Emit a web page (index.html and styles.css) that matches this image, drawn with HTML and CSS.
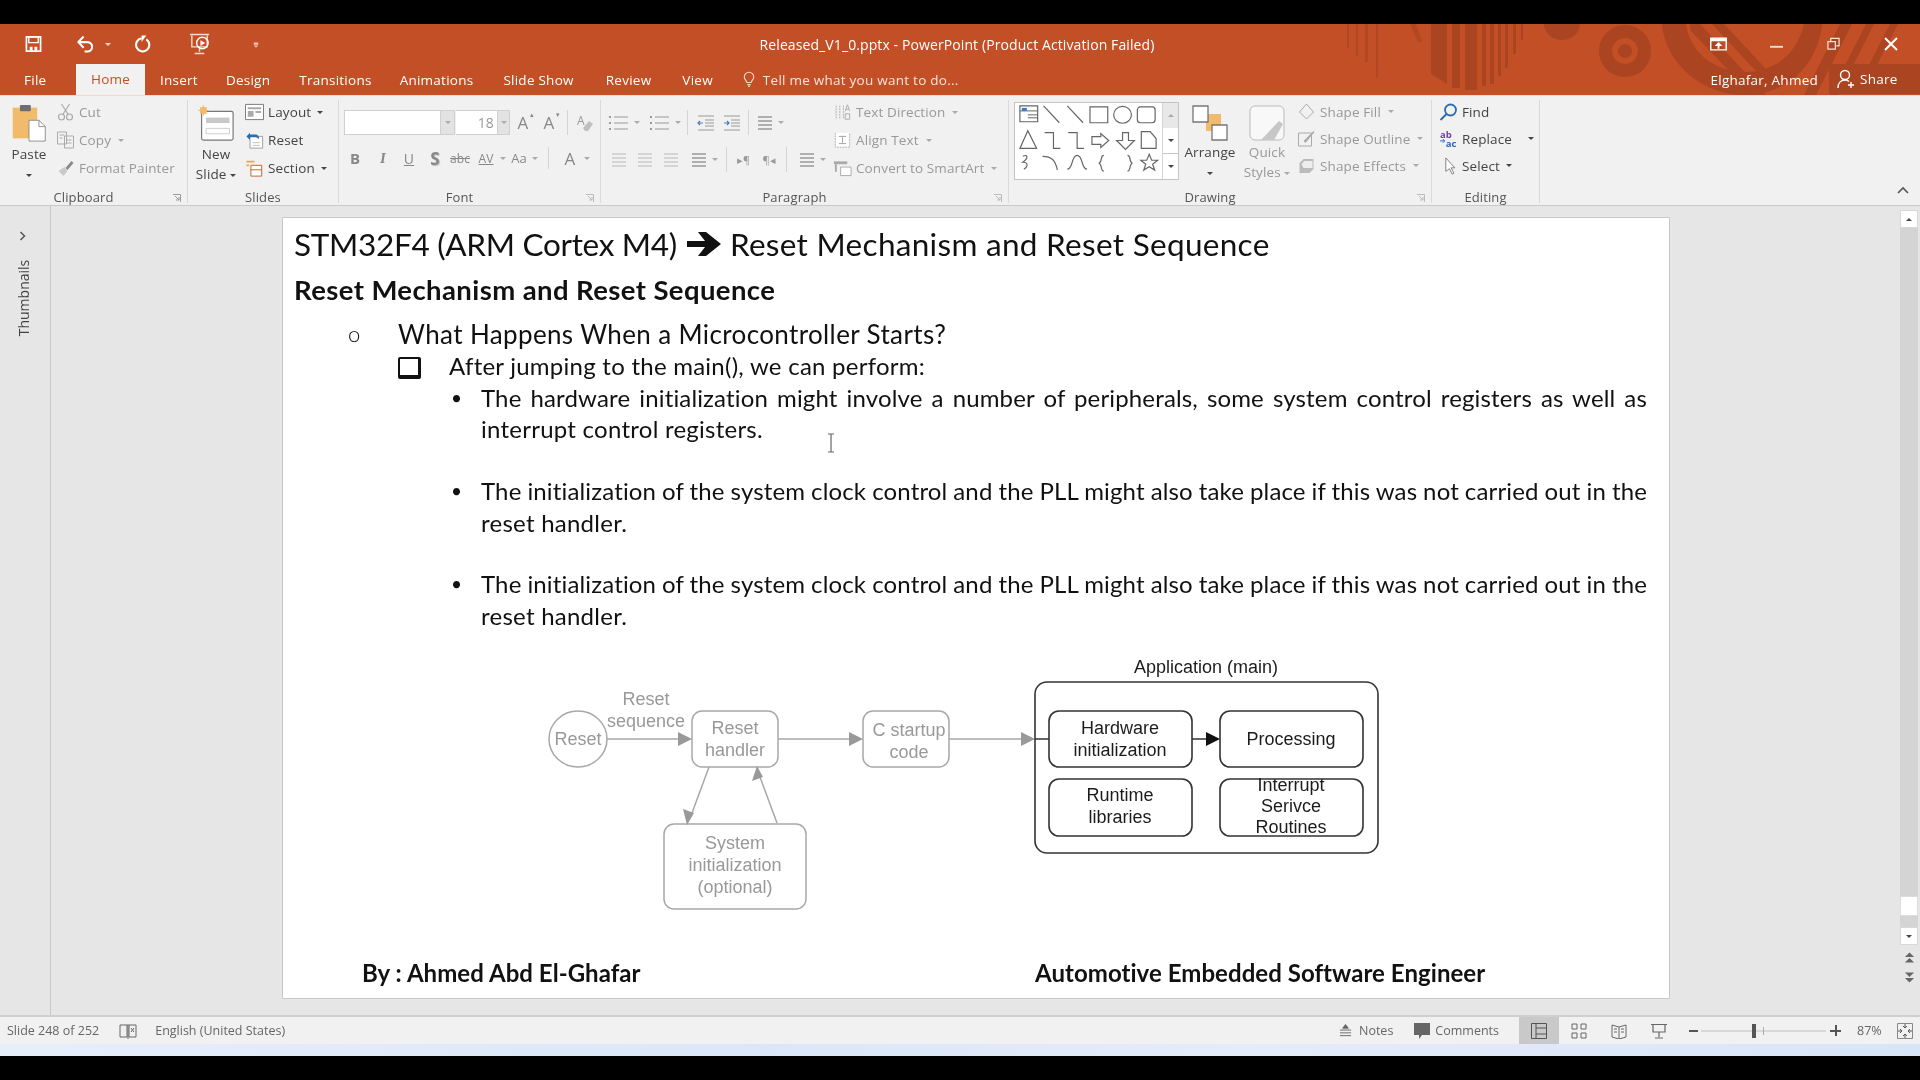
FILE: index.html
```html
<!DOCTYPE html>
<html lang="en">
<head>
<meta charset="utf-8">
<title>Released_V1_0.pptx - PowerPoint</title>
<link rel="stylesheet" href="styles.css">
</head>
<body>
<svg class="defs" aria-hidden="true">
  <symbol id="lines" viewBox="0 0 20 20"><path d="M3 4h14M3 8h14M3 12h14M3 16h14" fill="none" stroke="currentColor" stroke-width="1.3"/></symbol>
  <symbol id="bullets" viewBox="0 0 24 20"><path d="M7 4h14M7 10h14M7 16h14" stroke="currentColor" stroke-width="1.2"/><path d="M2 3h2v2H2zM2 9h2v2H2zM2 15h2v2H2z" fill="currentColor"/></symbol>
  <symbol id="indent" viewBox="0 0 20 20"><path d="M2 3h16M9 7h9M9 10h9M9 13h9M2 17h16" stroke="currentColor" stroke-width="1.2"/><path d="M7 10H2m2-2-2 2 2 2" fill="none" stroke="#4a7ebb" stroke-width="1.2"/></symbol>
  <symbol id="outdent" viewBox="0 0 20 20"><path d="M2 3h16M9 7h9M9 10h9M9 13h9M2 17h16" stroke="currentColor" stroke-width="1.2"/><path d="M2 10h5m-2-2 2 2-2 2" fill="none" stroke="#4a7ebb" stroke-width="1.2"/></symbol>
</svg>

<div class="letterbox-top"></div>

<header class="titlebar">
  <svg class="art" viewBox="0 24 1920 71" aria-hidden="true">
    <g fill="#ab4421">
      <path d="M1347 24h2v24h-2zM1356 24h2v32h-2zM1365 24h3v38h-3zM1376 24h2v54h-2z" opacity=".7"/>
      <path d="M1410 24h6l6 18h-4z" opacity=".7"/>
      <path d="M1431 24h16v60l-16-10zM1452 24h8v64h-8zM1465 24h12v66h-12zM1482 24h4v62h-4zM1490 24h4v60h-4zM1498 24h3v52h-3zM1505 24h3v44h-3zM1513 24h3v30h-3zM1521 24h2v16h-2z"/>
      <path d="M1544 24h36a18 16 0 0 1-36 0z"/>
      <path d="M1625 25a26 26 0 1 0 .01 0zm0 13a13 13 0 1 1-.01 0z"/>
      <circle cx="1625" cy="51" r="7"/>
      <path d="M1662 24h24c4 30 30 48 60 48s52-20 58-48h18c-4 42-36 71-78 71-38 0-78-28-82-71z"/>
      <path d="M1690 30l62 65h14l-66-71h-10zM1712 24l60 64 8-4-56-60zM1840 24l-36 71h12l36-71zM1866 24l-36 71h8l36-71zM1890 24l-34 66h8l34-66z"/>
    </g>
  </svg>
  <div class="title-row">
    <div class="qat">
      <svg class="qi q1" viewBox="0 0 18 18"><path d="M1.500 1.500h15v15h-15z" fill="none" stroke="#fff" stroke-width="1.8"/><path d="M4 1.500h10v6H4z" fill="none" stroke="#fff" stroke-width="1.4"/><path d="M5 12h3v4H5zM10 12h3v4h-3z" fill="#fff"/></svg>
      <svg class="qi q2" viewBox="0 0 18 18"><path d="M2 7h9a5 5 0 0 1 0 10H8" fill="none" stroke="#fff" stroke-width="2.2"/><path d="M7 1 1.500 7 7 13" fill="none" stroke="#fff" stroke-width="2.2"/></svg>
      <span class="caret q3"></span>
      <svg class="qi q4" viewBox="0 0 18 18"><path d="M8 3A7 7 0 1 0 13 4" fill="none" stroke="#fff" stroke-width="2.2"/><path d="M8 0v7l5-7z" fill="#fff"/></svg>
      <svg class="qi q5" viewBox="0 0 24 24"><path d="M2 2h20M4 3v12h16V3M12 15v5M7 22h10" fill="none" stroke="#f3dcd2" stroke-width="1.5"/><circle cx="15" cy="11" r="6" fill="none" stroke="#fff" stroke-width="1.5"/><path d="M13 8l5 3-5 3z" fill="#fff"/></svg>
      <svg class="qi q6" viewBox="0 0 8 12"><path d="M1 1h6M1 4h6v3H1zM4 11 1 8h6z" fill="#ecc6b7"/></svg>
    </div>
    <div class="doc-title">Released_V1_0.pptx - PowerPoint (Product Activation Failed)</div>
    <div class="winctl">
      <svg class="wi w1" viewBox="0 0 18 14"><path d="M.8.8h16.400v12.400H.8z" fill="none" stroke="#fff" stroke-width="1.5"/><path d="M1 1h16v3H1zM9 5l4 4h-3v3H8V9H5z" fill="#fff"/></svg>
      <svg class="wi w2" viewBox="0 0 14 14"><path d="M0 10h14" stroke="#f6e1d8" stroke-width="2"/></svg>
      <svg class="wi w3" viewBox="0 0 14 14"><path d="M1 4.500h8v8H1zM4 4V1h9v8h-3" fill="none" stroke="#f6e1d8" stroke-width="1.3"/></svg>
      <svg class="wi w4" viewBox="0 0 14 14"><path d="M1 1l12 12M13 1 1 13" stroke="#fff" stroke-width="2"/></svg>
    </div>
  </div>
  <nav class="tab-row">
    <span class="tab tab-file">File</span>
    <span class="tab tab-home">Home</span>
    <span class="tab t-insert">Insert</span>
    <span class="tab t-design">Design</span>
    <span class="tab t-trans">Transitions</span>
    <span class="tab t-anim">Animations</span>
    <span class="tab t-show">Slide Show</span>
    <span class="tab t-review">Review</span>
    <span class="tab t-view">View</span>
    <svg class="bulb" viewBox="0 0 14 18"><path d="M4.500 12.500C4 10 1.500 9 1.500 6a5.500 5.500 0 0 1 11 0c0 3-2.500 4-3 6.500zM5 15h4M6 17h2" fill="none" stroke="#f3d9cd" stroke-width="1.3"/></svg>
    <span class="tell">Tell me what you want to do...</span>
    <span class="user">Elghafar, Ahmed</span>
    <span class="share">
      <svg class="share-ic" viewBox="0 0 18 20"><circle cx="8" cy="6" r="4.500" fill="none" stroke="#fff" stroke-width="1.4"/><path d="M1 19c0-5 3-8 7-8 2 0 3 .6 4 1.500M11 16h6M14 13v6" fill="none" stroke="#fff" stroke-width="1.4"/></svg>
      Share
    </span>
  </nav>
</header>

<section class="ribbon">
  <div class="group g-clip">
    <div class="gbody">
      <div class="big paste">
        <svg class="big-ic" viewBox="0 0 38 42"><rect x="1" y="4" width="27" height="34" fill="#f2bb6b"/><rect x="9" y="1" width="12" height="7" rx="1" fill="#6f6f6f"/><path d="M19 18h11l7 7v16H19z" fill="#fff" stroke="#8a8a8a"/><path d="M30 18v7h7" fill="none" stroke="#8a8a8a"/></svg>
        <span class="blab">Paste</span>
        <span class="blab"><i class="caret dark"></i></span>
      </div>
      <div class="small-col">
        <div class="srow off"><svg class="sic" viewBox="0 0 18 18"><path d="M5 1l7 11M13 1 6 12" stroke="#aaa" fill="none" stroke-width="1.2"/><circle cx="5" cy="14" r="3" fill="none" stroke="#aaa" stroke-width="1.2"/><circle cx="13" cy="14" r="3" fill="none" stroke="#aaa" stroke-width="1.2"/></svg>Cut</div>
        <div class="srow off"><svg class="sic" viewBox="0 0 18 18"><path d="M1 1h9v12H1zM8 5h9v12H8z" fill="#f2f2f2" stroke="#aaa"/><path d="M3 4h5M3 7h3M10 9h5M10 12h5" stroke="#aaa"/></svg>Copy <i class="caret mgl"></i></div>
        <div class="srow off"><svg class="sic" viewBox="0 0 18 18"><path d="M9 9l6-7 2 2-6 7z" fill="#888"/><path d="M2 12l6-4 3 4-4 5z" fill="#c9c9c9"/></svg>Format Painter</div>
      </div>
    </div>
    <div class="glabel">Clipboard<svg class="launch" viewBox="0 0 8 8"><path d="M0 .500h7.500V8M2 2l4 4M6 3v3H3" fill="none" stroke="#999"/></svg></div>
  </div>

  <div class="group g-slides">
    <div class="gbody">
      <div class="big newslide">
        <svg class="big-ic" viewBox="0 0 40 40"><rect x="4" y="7" width="35" height="32" rx="2" fill="#fff" stroke="#777" stroke-width="1.300"/><path d="M9 14h26v6H9z" fill="#c8c8c8"/><path d="M9 26h26v6H9z" fill="none" stroke="#c8c8c8"/><circle cx="6" cy="6" r="4" fill="#f2bb6b"/><path d="M6 0v12M0 6h12M2 2l8 8M10 2l-8 8" stroke="#f2bb6b"/></svg>
        <span class="blab">New</span>
        <span class="blab">Slide <i class="caret dark"></i></span>
      </div>
      <div class="small-col on">
        <div class="srow"><svg class="sic" viewBox="0 0 20 18"><path d="M.5 1h19v16H.5z" fill="#fff" stroke="#777"/><path d="M3 4h14v2H3zM3 8h6v6H3zM11 8h6v2h-6z" fill="#aaa"/></svg>Layout <i class="caret dark"></i></div>
        <div class="srow"><svg class="sic" viewBox="0 0 20 20"><path d="M5 6h14v13H5z" fill="#fff" stroke="#999"/><path d="M8 13h8M8 16h8" stroke="#bbb"/><path d="M1 6l4-4v2h6a4 4 0 0 1 4 5l-3-2H5v3z" fill="#2b6cb0"/></svg>Reset</div>
        <div class="srow"><svg class="sic" viewBox="0 0 20 20"><path d="M1 2h9v2H1zM1 6h3v2H1z" fill="#f2a64a"/><path d="M6 7h12v12H6z" fill="#fff" stroke="#c2581f"/><path d="M6 12h12" stroke="#c2581f"/></svg>Section <i class="caret dark"></i></div>
      </div>
    </div>
    <div class="glabel">Slides</div>
  </div>

  <div class="group g-font">
    <div class="gbody col">
      <div class="frow1">
        <span class="box b-font"></span><span class="drop"><i class="caret"></i></span>
        <span class="box b-size">18</span><span class="drop d2"><i class="caret"></i></span>
        <span class="glyph gA">A<sup>▴</sup></span><span class="glyph gA2">A<sup>▾</sup></span><span class="vsep"></span>
        <svg class="clear" viewBox="0 0 18 18"><text x="1" y="11" class="mini">A</text><path d="M7 14l6-7 4 3-5 7H9z" fill="#c0c0c0"/></svg>
      </div>
      <div class="frow2">
        <b class="fx c1">B</b><i class="fx c2 serif">I</i><span class="fx c3 und">U</span><b class="fx c4 shadow">S</b><span class="fx c5 strike">abc</span><span class="fx c6 av">AV</span><i class="caret c7"></i><span class="fx c8">Aa</span><i class="caret c9"></i><span class="vsep short"></span><span class="fx c10">A</span><i class="caret c11"></i>
      </div>
    </div>
    <div class="glabel">Font<svg class="launch" viewBox="0 0 8 8"><path d="M0 .500h7.500V8M2 2l4 4M6 3v3H3" fill="none" stroke="#bbb"/></svg></div>
  </div>

  <div class="group g-para">
    <div class="gbody">
      <div class="para-left">
        <div class="prow p1">
          <svg class="pic w24"><use href="#bullets"/></svg><i class="caret"></i>
          <svg class="pic w24 ml8"><use href="#bullets"/></svg><i class="caret"></i>
          <span class="vsep ml6"></span>
          <svg class="pic ml8"><use href="#indent"/></svg><svg class="pic ml6"><use href="#outdent"/></svg>
          <span class="vsep ml6"></span>
          <svg class="pic ml6"><use href="#lines"/></svg><i class="caret"></i>
        </div>
        <div class="prow p2">
          <svg class="pic faint ml2"><use href="#lines"/></svg><svg class="pic faint ml6"><use href="#lines"/></svg><svg class="pic faint ml6"><use href="#lines"/></svg>
          <svg class="pic ml8"><use href="#lines"/></svg><i class="caret"></i>
          <span class="vsep ml8"></span>
          <span class="rtl ml10">▸¶</span><span class="rtl ml12">¶◂</span>
          <span class="vsep ml10"></span>
          <svg class="pic ml10"><use href="#lines"/></svg><i class="caret"></i>
        </div>
      </div>
      <div class="small-col para-col">
        <div class="srow off"><svg class="sic" viewBox="0 0 18 20"><path d="M2 3v15M6 3v15M10 3v15" stroke="#aaa" stroke-dasharray="2 1"/><path d="M12 9l2.500-7L17 9M13 7h3M12 12h5v6h-5z" fill="none" stroke="#aaa"/></svg>Text Direction <i class="caret mgl"></i></div>
        <div class="srow off"><svg class="sic" viewBox="0 0 20 20"><path d="M2 2v16h16V2" fill="#fff" stroke="#aaa" stroke-dasharray="2 1"/><path d="M6 6h8M6 14h8M10 7v6" stroke="#999"/></svg>Align Text <i class="caret mgl"></i></div>
        <div class="srow off"><svg class="sic" viewBox="0 0 20 18"><path d="M8 8h11v9H8z" fill="#fff" stroke="#aaa"/><path d="M1 2h14v3H1z" fill="#aaa"/><path d="M3 5v8" stroke="#aaa" stroke-width="2"/></svg>Convert to SmartArt <i class="caret mgl"></i></div>
      </div>
    </div>
    <div class="glabel">Paragraph<svg class="launch" viewBox="0 0 8 8"><path d="M0 .500h7.500V8M2 2l4 4M6 3v3H3" fill="none" stroke="#bbb"/></svg></div>
  </div>

  <div class="group g-draw">
    <div class="gbody">
      <div class="gallery">
        <svg class="shapes" viewBox="0 2 147 77">
          <g fill="none" stroke="#666" stroke-width="1.200">
            <g transform="translate(0 -1)">
              <path d="M4 6h18v16H4z"/><path d="M4 11h18M12 15h10M12 18h10" stroke-width="1"/>
              <path d="M28 6l16 17M52 6l16 17"/><path d="M75 7h18v16H75zM99 15a9 8.500 0 1 0 18 0 9 8.500 0 1 0-18 0z"/><rect x="123" y="7" width="18" height="16" rx="3"/>
            </g>
            <g transform="translate(0 -2)">
              <path d="M12 32 4 50h17zM29 34h9v16h7M53 34h9v16h7M77 38h9v-3l8 7-8 7v-3h-9zM108 34v8h-6l9 9 9-9h-6v-8zM127 33h9l6 7v10h-15z"/>
            </g>
            <g transform="translate(0 -5)">
              <path d="M7 61c6-3 5 3 0 6 7 0 4 6 1 7M27 61c9 0 13 4 15 14M52 74c6 0 4-14 10-14s4 14 10 14M89 60c-4 0-1 7-5 8 4 1 1 8 5 8M113 60c4 0 1 7 5 8-4 1-1 8-5 8M135 59l2.500 6h6l-5 4 2 6-5.500-3.500-5.500 3.500 2-6-5-4h6z"/>
            </g>
          </g>
          <path d="M6 7h5v3H6z" fill="#3b78c4"/>
        </svg>
        <div class="gscroll">
          <span class="gs gs-up"><i class="caret up"></i></span>
          <span class="gs"><i class="caret dark"></i></span>
          <span class="gs gs-more"><i class="caret dark"></i></span>
        </div>
      </div>
      <div class="big arrange">
        <svg class="big-ic" viewBox="0 0 36 36"><path d="M14 9h15v17H14z" fill="#f2bb6b"/><path d="M1 1h15v16H1z" fill="#fff" stroke="#777" stroke-width="1.300"/><path d="M20 20h15v15H20z" fill="#fff" stroke="#777" stroke-width="1.300"/></svg>
        <span class="blab">Arrange</span>
        <span class="blab"><i class="caret dark"></i></span>
      </div>
      <div class="big quick">
        <svg class="big-ic" viewBox="0 0 36 36"><rect x="1" y="1" width="34" height="34" rx="5" fill="#f8f8f8" stroke="#bbb"/><path d="M12 35l18-19 4 3-9 16z" fill="#c7c7c7"/></svg>
        <span class="blab off">Quick</span>
        <span class="blab off">Styles <i class="caret"></i></span>
      </div>
      <div class="small-col shape-col">
        <div class="srow off srow27"><svg class="sic" viewBox="0 0 18 18"><path d="M9 1l7 8-7 7-7-7z" fill="none" stroke="#aaa"/></svg>Shape Fill <i class="caret mgl"></i></div>
        <div class="srow off srow27"><svg class="sic" viewBox="0 0 18 18"><path d="M1 3h13v13H1z" fill="none" stroke="#aaa"/><path d="M6 11 16 1l1 1L8 13z" fill="#aaa"/></svg>Shape Outline <i class="caret mgl"></i></div>
        <div class="srow off srow27"><svg class="sic" viewBox="0 0 18 18"><path d="M2 6l4-4h10v10l-4 4H2z" fill="#bbb"/><path d="M4 7l3-3h8v7H6z" fill="#eee"/></svg>Shape Effects <i class="caret mgl"></i></div>
      </div>
    </div>
    <div class="glabel">Drawing<svg class="launch" viewBox="0 0 8 8"><path d="M0 .500h7.500V8M2 2l4 4M6 3v3H3" fill="none" stroke="#bbb"/></svg></div>
  </div>

  <div class="group g-edit">
    <div class="gbody">
      <div class="small-col edit-col">
        <div class="srow srow27"><svg class="sic" viewBox="0 0 18 18"><circle cx="11" cy="7" r="5.500" fill="none" stroke="#2b6cb0" stroke-width="1.800"/><path d="M7 11l-6 6" stroke="#2b6cb0" stroke-width="2"/></svg>Find</div>
        <div class="srow srow27"><svg class="sic" viewBox="0 0 20 18"><text x="1" y="8" class="ab">ab</text><text x="7" y="17" class="ac">ac</text><path d="M1 11h5M4 9l2 2-2 2" stroke="#2b6cb0" fill="none"/></svg>Replace <i class="caret dark mgl2"></i></div>
        <div class="srow srow27"><svg class="sic" viewBox="0 0 18 20"><path d="M6 1v15l4-3 3 6 2-1-3-6h4z" fill="#fff" stroke="#777"/></svg>Select <i class="caret dark"></i></div>
      </div>
    </div>
    <div class="glabel">Editing</div>
  </div>

  <div class="ribbon-rest">
    <svg class="collapse" viewBox="0 0 12 8"><path d="M1 7l5-5 5 5" fill="none" stroke="#555" stroke-width="1.600"/></svg>
  </div>
</section>

<main class="workspace">
  <aside class="thumbs">
    <svg class="chev" viewBox="0 0 8 10"><path d="M1.500 1l4 4-4 4" fill="none" stroke="#555" stroke-width="1.500"/></svg>
    <span class="thumbs-label">Thumbnails</span>
  </aside>
  <div class="canvas">
    <article class="slide">
      <h1 class="s-title">STM32F4 (ARM Cortex M4)<svg class="s-arrow" viewBox="0 0 34 24"><path d="M0 9h18L11 0h8l15 12-15 12h-8l7-9H0z" fill="#111"/></svg><span class="t2">Reset Mechanism and Reset Sequence</span></h1>
      <h2 class="s-sub">Reset Mechanism and Reset Sequence</h2>
      <div class="l1"><span class="m1">o</span>What Happens When a Microcontroller Starts?</div>
      <div class="l2"><span class="m2"></span>After jumping to the main(), we can perform:</div>
      <div class="l3 tight"><span class="m3">•</span><p class="just"><span class="jl">The hardware initialization might involve a number of peripherals, some system control registers as well as</span>interrupt control registers.</p></div>
      <div class="l3 gap first-gap"><span class="m3">•</span><p class="just"><span class="jl">The initialization of the system clock control and the PLL might also take place if this was not carried out in the</span>reset handler.</p></div>
      <div class="l3 gap"><span class="m3">•</span><p class="just"><span class="jl">The initialization of the system clock control and the PLL might also take place if this was not carried out in the</span>reset handler.</p></div>
      <svg class="diagram" viewBox="283 650 1386 270">
        <g class="dg">
          <ellipse cx="578" cy="739" rx="29" ry="28"/>
          <rect x="692" y="711" width="86" height="56" rx="10"/>
          <rect x="863" y="711" width="86" height="56" rx="10"/>
          <rect x="664" y="824" width="142" height="85" rx="10"/>
          <path d="M607 739h75M778 739h75M949 739h76M709 767l-17 46M777 823l-17-46"/>
          <path class="ah" d="M678 732l14 7-14 7zM849 732l14 7-14 7zM1021 732l14 7-14 7zM683 809l11 4-7 12zM752 781l11-4-6-11z"/>
        </g>
        <g class="dk">
          <rect x="1035" y="682" width="343" height="171" rx="12"/>
          <rect x="1049" y="711" width="143" height="56" rx="10"/>
          <rect x="1220" y="711" width="143" height="56" rx="10"/>
          <rect x="1049" y="779" width="143" height="57" rx="10"/>
          <rect x="1220" y="779" width="143" height="57" rx="10"/>
          <path d="M1035 739h14M1192 739h18"/>
          <path class="ah" d="M1206 732l14 7-14 7z"/>
        </g>
        <g class="tg">
          <text x="646" y="705">Reset</text><text x="646" y="727">sequence</text>
          <text x="578" y="745">Reset</text>
          <text x="735" y="734">Reset</text><text x="735" y="756">handler</text>
          <text x="909" y="736">C startup</text><text x="909" y="758">code</text>
          <text x="735" y="849">System</text><text x="735" y="871">initialization</text><text x="735" y="893">(optional)</text>
        </g>
        <g class="tk">
          <text x="1206" y="673">Application (main)</text>
          <text x="1120" y="734">Hardware</text><text x="1120" y="756">initialization</text>
          <text x="1291" y="745">Processing</text>
          <text x="1120" y="801">Runtime</text><text x="1120" y="823">libraries</text>
          <text x="1291" y="791">Interrupt</text><text x="1291" y="812">Serivce</text><text x="1291" y="833">Routines</text>
        </g>
      </svg>
      <footer class="s-foot"><span class="f-left">By : Ahmed Abd El-Ghafar</span><span class="f-right">Automotive Embedded Software Engineer</span></footer>
      <svg class="ibeam" viewBox="0 0 8 20"><path d="M1 1h6M4 1v18M1 19h6" fill="none" stroke="#666" stroke-width="1.200"/></svg>
    </article>
  </div>
  <aside class="vscroll">
    <span class="sbtn"><i class="caret up dark"></i></span>
    <span class="strack"><span class="sthumb"></span></span>
    <span class="sbtn"><i class="caret dark"></i></span>
    <svg class="pg pg-up" viewBox="0 0 12 14"><path d="M6 1l5 5H1zM6 7l5 5H1z" fill="#666"/></svg>
    <svg class="pg" viewBox="0 0 12 14"><path d="M6 13l5-5H1zM6 7l5-5H1z" fill="#666"/></svg>
  </aside>
</main>

<footer class="status">
  <span class="st-slide">Slide 248 of 252</span>
  <svg class="st-book" viewBox="0 0 18 16"><path d="M8 2H1v12h7zM10 2h7v12h-7zM9 1v15" fill="none" stroke="#666"/><path d="M12 5l3 4M15 5l-3 4" stroke="#666"/></svg>
  <span class="st-lang">English (United States)</span>
  <span class="st-spacer"></span>
  <svg class="st-notes" viewBox="0 0 14 14"><path d="M7 0l3 4H4zM1 6h12M1 9h12M1 12h12" fill="#666" stroke="#666"/></svg>
  <span class="st-n">Notes</span>
  <svg class="st-com" viewBox="0 0 16 16"><path d="M0 0h16v12H8l-3 4v-4H0z" fill="#666"/></svg>
  <span class="st-c">Comments</span>
  <span class="view active"><svg viewBox="0 0 16 16"><path d="M.5.500h15v15H.500zM5 .500v15M5 5h10M5 11h10" fill="none" stroke="#555"/></svg></span>
  <span class="view"><svg viewBox="0 0 16 16"><path d="M1 1h5v5H1zM10 1h5v5h-5zM1 10h5v5H1zM10 10h5v5h-5z" fill="none" stroke="#666"/></svg></span>
  <span class="view"><svg viewBox="0 0 16 16"><path d="M1 2l7 2 7-2v12l-7 2-7-2zM8 4v12M3 6h3M10 6h3M3 9h3M10 9h3" fill="none" stroke="#666"/></svg></span>
  <span class="view"><svg viewBox="0 0 16 16"><path d="M0 1.500h16M2 2v7h12V2M8 9v5M4 15h8" fill="none" stroke="#666" stroke-width="1.200"/></svg></span>
  <span class="zoom-minus"></span>
  <span class="slider"><span class="knob"></span><span class="tick"></span></span>
  <span class="zoom-plus"></span>
  <span class="st-pct">87%</span>
  <svg class="st-fit" viewBox="0 0 16 16"><path d="M.5.500h15v15H.500z" fill="none" stroke="#888"/><path d="M8 1v4M6 3l2 2 2-2M8 15v-4M6 13l2-2 2 2M1 8h4M3 6l2 2-2 2M15 8h-4M13 6l-2 2 2 2" fill="none" stroke="#555"/></svg>
</footer>
<div class="strip"></div>
<div class="letterbox-bottom"></div>
</body>
</html>
```
FILE: styles.css
```css
* { box-sizing: border-box; }
html, body { margin: 0; padding: 0; }
body {
  width: 1920px; height: 1080px; overflow: hidden; background: #000;
  font-family: "Open Sans", "Noto Sans", sans-serif; font-size: 13px; color: #444;
  filter: blur(.45px);
}
.defs { display: none; }
.letterbox-top { height: 24px; background: #000; }
.letterbox-bottom { height: 24px; background: #000; }

/* caret */
.caret { display: inline-block; width: 0; height: 0; border: 3px solid transparent; border-top: 3px solid #aaa; border-bottom: 0; vertical-align: middle; }
.caret.dark { border-top-color: #444; }
.caret.up { border-top: 0; border-bottom: 3px solid #aaa; }
.caret.up.dark { border-bottom-color: #444; }
.mgl { margin-left: 4px; }
.mgl2 { margin-left: 12px; }

/* title bar */
.titlebar { position: relative; height: 71px; background: #c24f26; color: #fff; overflow: hidden; }
.art { position: absolute; left: 0; top: 0; width: 1920px; height: 71px; }
.title-row { position: relative; height: 40px; display: flex; align-items: center; }
.qat { display: flex; align-items: center; width: 270px; position: relative; height: 40px; }
.qi { display: block; flex: none; }
.q1 { width: 17px; height: 18px; margin-left: 25px; }
.q2 { width: 17px; height: 18px; margin-left: 35px; }
.q3 { margin-left: 11px; border-top-color: #f3d9cd; }
.q4 { width: 17px; height: 18px; margin-left: 23px; }
.q5 { width: 23px; height: 24px; margin-left: 37px; }
.q6 { width: 6px; height: 10px; margin-left: 42px; }
.doc-title { position: absolute; left: 747px; width: 420px; text-align: center; white-space: nowrap; font-size: 14px; letter-spacing: .1px; }
.winctl { margin-left: auto; display: flex; align-items: center; height: 40px; }
.wi { display: block; flex: none; }
.w1 { width: 17px; height: 14px; margin-right: 43px; }
.w2 { width: 13px; height: 14px; margin-right: 44px; }
.w3 { width: 13px; height: 14px; margin-right: 44px; }
.w4 { width: 14px; height: 14px; margin-right: 22px; }

.tab-row { position: relative; height: 31px; display: flex; align-items: center; font-size: 13.500px; letter-spacing: .25px; }
.tab { flex: none; white-space: nowrap; }
.tab-file { margin-left: 24px; width: 52px; }
.tab-home { width: 69px; height: 31px; background: #f1f1f1; color: #c24f26; text-align: center; line-height: 31px; }
.t-insert { margin-left: 15px; }
.t-design { margin-left: 28px; }
.t-trans { margin-left: 29px; }
.t-anim { margin-left: 28px; }
.t-show { margin-left: 30px; }
.t-review { margin-left: 32px; }
.t-view { margin-left: 31px; }
.bulb { width: 12px; height: 17px; margin-left: 30px; flex: none; }
.tell { margin-left: 8px; color: #f8e4db; white-space: nowrap; }
.user { margin-left: auto; white-space: nowrap; margin-right: 11px; }
.share { width: 91px; height: 30px; margin-bottom: 1px; background: #ab4421; display: flex; align-items: center; padding-left: 8px; gap: 5px; flex: none; }
.share-ic { width: 18px; height: 20px; }

/* ribbon */
.ribbon { height: 111px; background: #f1f1f1; display: flex; padding-top: 4px; border-bottom: 1px solid #c9c9c9; border-top: 1px solid #f6d8cb; font-size: 13.500px; letter-spacing: .12px; }
.group { flex: none; display: flex; flex-direction: column; border-right: 1px solid #dadada; height: 103px; }
.gbody { height: 87px; flex: none; display: flex; }
.gbody.col { flex-direction: column; }
.glabel { position: relative; height: 18px; flex: none; margin-top: 1px; line-height: 18px; text-align: center; font-size: 13px; color: #555; }
.g-clip .glabel, .g-font .glabel, .g-para .glabel, .g-draw .glabel { padding-right: 20px; }
.launch { position: absolute; right: 6px; top: 6px; width: 8px; height: 8px; }
.g-clip { width: 188px; }
.g-slides { width: 151px; }
.g-font { width: 262px; }
.g-para { width: 408px; }
.g-draw { width: 423px; }
.g-edit { width: 108px; }
.ribbon-rest { flex: 1; position: relative; }
.collapse { position: absolute; right: 11px; bottom: 11px; width: 12px; height: 8px; }

.big { flex: none; display: flex; flex-direction: column; align-items: center; }
.big-ic { width: 36px; height: 38px; flex: none; margin-top: 4px; }
.blab { height: 20px; line-height: 20px; color: #444; white-space: nowrap; }
.blab.off { color: #999; }
.paste { width: 50px; margin-left: 4px; }
.paste .big-ic { margin-bottom: 2px; }
.newslide { width: 70px; margin-left: -8px; padding-left: 2px; }
.newslide .big-ic { margin-bottom: 2px; }
.small-col { display: flex; flex-direction: column; margin-top: -2px; }
.srow { height: 28px; display: flex; align-items: center; gap: 4px; white-space: nowrap; color: #444; flex: none; }
.srow27 { height: 27px; }
.srow.off { color: #999; }
.srow .caret { margin-left: 2px; }
.srow .mgl2 { margin-left: 12px; }
.srow .mgl { margin-left: 3px; }
.sic { width: 19px; height: 18px; flex: none; }
.g-clip .small-col { margin-left: 2px; }
.g-slides .small-col { margin-left: -5px; }

/* font group */
.frow1 { display: flex; align-items: center; margin: 10px 0 0 5px; height: 25px; }
.box { background: #fff; border: 1px solid #d0d0d0; height: 25px; display: block; }
.b-font { width: 96px; border-right: 0; }
.b-size { width: 41px; text-align: right; line-height: 23px; color: #999; border-right: 0; border-left: 0; margin-left: 1px; padding-right: 3px; font-size: 14px; }
.drop { width: 15px; height: 25px; background: #e3e3e3; border: 1px solid #d0d0d0; display: flex; align-items: center; justify-content: center; }
.d2 { width: 13px; }
.glyph { color: #888; font-size: 17px; position: relative; width: 26px; text-align: center; }
.glyph sup { position: absolute; font-size: 7px; top: -1px; right: 2px; }
.vsep { display: inline-block; flex: none; width: 1px; height: 25px; background: #d4d4d4; }
.frow1 .vsep { margin-left: 5px; }
.clear { width: 18px; height: 18px; margin-left: 8px; flex: none; }
.mini { font-size: 12px; fill: #999; }
.frow2 { position: relative; display: flex; align-items: center; height: 24px; margin-top: 11px; color: #888; font-size: 14px; }
.fx { display: block; text-align: center; flex: none; }
.c1 { width: 20px; margin-left: 6px; font-size: 15px; }
.c2 { width: 16px; margin-left: 10px; font-size: 15px; }
.serif { font-family: "Liberation Serif", serif; font-weight: bold; }
.c3 { width: 16px; margin-left: 10px; text-decoration: underline; font-size: 14px; }
.c4 { width: 16px; margin-left: 10px; font-size: 17px; text-shadow: 1px 1px 1px #bbb; }
.c5 { width: 20px; margin-left: 7px; font-size: 12px; text-decoration: line-through; }
.c6 { width: 20px; margin-left: 6px; font-size: 12px; text-decoration: underline; }
.c7 { margin-left: 4px; }
.c8 { width: 20px; margin-left: 3px; font-size: 13px; }
.c9 { margin-left: 3px; }
.short { margin-left: 10px; height: 22px; }
.c10 { width: 16px; margin-left: 13px; font-size: 17px; }
.c11 { margin-left: 6px; }

/* paragraph group */
.para-left { width: 232px; flex: none; color: #888; }
.prow { display: flex; align-items: center; height: 25px; padding-left: 6px; }
.p1 { margin-top: 10px; }
.p2 { margin-top: 12px; }
.prow .caret { margin-left: 3px; }
.pic { width: 20px; height: 20px; flex: none; color: #999; }
.w24 { width: 24px; }
.faint { color: #ccc; }
.ml2 { margin-left: 2px; }
.ml6 { margin-left: 6px; }
.ml8 { margin-left: 8px; }
.ml10 { margin-left: 10px; }
.ml12 { margin-left: 12px; }
.rtl { font-size: 11px; color: #999; flex: none; }

/* drawing */
.gallery { width: 165px; height: 78px; margin: 2px 0 0 5px; display: flex; background: #fff; border: 1px solid #c4c4c4; flex: none; }
.shapes { width: 147px; height: 76px; flex: none; }
.gscroll { flex: 1; display: flex; flex-direction: column; border-left: 1px solid #d4d4d4; }
.gs { flex: 1; display: flex; align-items: center; justify-content: center; background: #fff; }
.gs-up { background: #e8e8e8; }
.gs-more { border-top: 1px solid #c4c4c4; }
.arrange { width: 56px; margin-left: 3px; }
.quick { width: 50px; margin-left: 4px; }
.shape-col { margin-left: 5px; margin-top: -2px; }
.edit-col { margin-left: 7px; margin-top: -2px; }
.ab { font-size: 10px; font-weight: bold; fill: #6a3fb0; }
.ac { font-size: 10px; font-weight: bold; fill: #2b6cb0; }

/* workspace */
.workspace { height: 809px; background: #e6e6e6; display: flex; }
.thumbs { width: 51px; flex: none; border-right: 1px solid #c8c8c8; position: relative; }
.chev { position: absolute; left: 19px; top: 25px; width: 8px; height: 10px; }
.thumbs-label { position: absolute; left: 23px; top: 92px; transform: translate(-50%, -50%) rotate(-90deg); font-size: 14px; color: #444; white-space: nowrap; }
.canvas { flex: 1; padding: 12px 0 0 232px; min-width: 0; }
.slide { position: relative; width: 1386px; height: 780px; background: #fff; box-shadow: 0 0 0 1px #c8c8c8; padding: 8px 22px 0 11px; color: #111; font-family: "Lato", "Liberation Sans", sans-serif; font-size: 24px; line-height: 32px; letter-spacing: .25px; }
.s-title { margin: 0; height: 36px; line-height: 36px; font-size: 31.500px; font-weight: 400; white-space: nowrap; letter-spacing: -.3px; display: flex; align-items: center; }
.t2 { letter-spacing: .3px; }
.s-arrow { width: 34px; height: 24px; margin: 0 9px 0 10px; flex: none; }
.s-sub { margin: 10px 0 0; height: 36px; line-height: 36px; font-size: 27.500px; font-weight: 700; white-space: nowrap; letter-spacing: .4px; }
.l1 { display: flex; margin: 10px 0 0 54px; font-size: 26px; letter-spacing: .37px; }
.m1 { width: 50px; flex: none; font-size: 22px; font-weight: 300; }
.l2 { display: flex; margin-left: 108px; }
.m2 { width: 47px; flex: none; position: relative; }
.m2::before { content: ""; position: absolute; left: -4px; top: 7px; width: 18px; height: 16px; border: 2px solid #111; border-right-width: 3px; border-bottom-width: 4px; border-radius: 2px; }
.l3 { display: flex; margin-left: 154px; }
.m3 { width: 33px; flex: none; padding-left: 3px; font-size: 19px; }
.tight { line-height: 31px; height: 62px; }
.gap { margin-top: 29px; }
.first-gap { margin-top: 31px; }
.just { margin: 0; flex: 1; min-width: 0; }
.jl { display: block; text-align: justify; text-align-last: justify; letter-spacing: .15px; word-spacing: -2.500px; }
.diagram { display: block; width: 1386px; height: 270px; margin: 18px 0 0 -11px; }
.dg rect, .dg ellipse, .dg path { fill: none; stroke: #a8a8a8; stroke-width: 1.500; }
.dg .ah { fill: #999; stroke: none; }
.dk rect, .dk path { fill: none; stroke: #333; stroke-width: 1.600; }
.dk .ah { fill: #111; stroke: none; }
.tg text, .tk text { font-family: "Liberation Sans", sans-serif; font-size: 18px; text-anchor: middle; letter-spacing: 0; }
.tg text { fill: #999; }
.tk text { fill: #1c1c1c; }
.s-foot { display: flex; margin: 37px 0 0 68px; font-weight: 700; white-space: nowrap; letter-spacing: .05px; }
.f-left { width: 673px; }
.ibeam { position: absolute; left: 544px; top: 215px; width: 8px; height: 20px; }

/* scrollbar */
.vscroll { width: 20px; flex: none; padding: 4px 2px 0 0; display: flex; flex-direction: column; align-items: stretch; }
.sbtn { height: 18px; flex: none; background: #fff; border: 1px solid #d8d8d8; display: flex; align-items: center; justify-content: center; }
.strack { height: 699px; flex: none; background: #d4d4d4; display: flex; flex-direction: column; justify-content: flex-end; padding-bottom: 11px; }
.sthumb { height: 20px; background: #fff; border: 1px solid #ddd; }
.pg { width: 11px; height: 14px; flex: none; margin: 5px 0 0 4px; }
.pg-up { margin-top: 6px; }

/* status bar */
.status { height: 29px; background: #f1f1f1; border-top: 2px solid #cfcfcf; display: flex; align-items: center; font-size: 12.500px; color: #666; white-space: nowrap; }
.st-slide { margin-left: 7px; }
.st-book { width: 18px; height: 16px; margin-left: 20px; flex: none; }
.st-lang { margin-left: 18px; }
.st-spacer { flex: 1; }
.st-notes { width: 13px; height: 14px; flex: none; }
.st-n { margin-left: 7px; }
.st-com { width: 16px; height: 16px; margin-left: 21px; flex: none; }
.st-c { margin-left: 5px; margin-right: 20px; }
.view { width: 40px; height: 27px; display: flex; align-items: center; justify-content: center; flex: none; }
.view svg { width: 16px; height: 16px; }
.view.active { background: #c9c9c9; }
.zoom-minus { width: 9px; height: 2px; background: #555; margin-left: 10px; flex: none; }
.slider { position: relative; width: 125px; height: 2px; background: #d8d8d8; margin-left: 3px; flex: none; }
.knob { position: absolute; left: 51px; top: -6px; width: 4px; height: 14px; background: #555; }
.tick { position: absolute; left: 62px; top: -3px; width: 1px; height: 8px; background: #aaa; }
.zoom-plus { position: relative; width: 11px; height: 2px; background: #555; margin-left: 4px; flex: none; }
.zoom-plus::after { content: ""; position: absolute; left: 4.500px; top: -4.500px; width: 2px; height: 11px; background: #555; }
.st-pct { margin-left: 16px; width: 30px; }
.st-fit { width: 16px; height: 16px; margin-left: 10px; margin-right: 7px; flex: none; }

.strip { height: 12px; background: linear-gradient(90deg, #e6eefa 0%, #dbe7f8 40%, #e4ecf9 65%, #d8e5f8 100%); }
```
